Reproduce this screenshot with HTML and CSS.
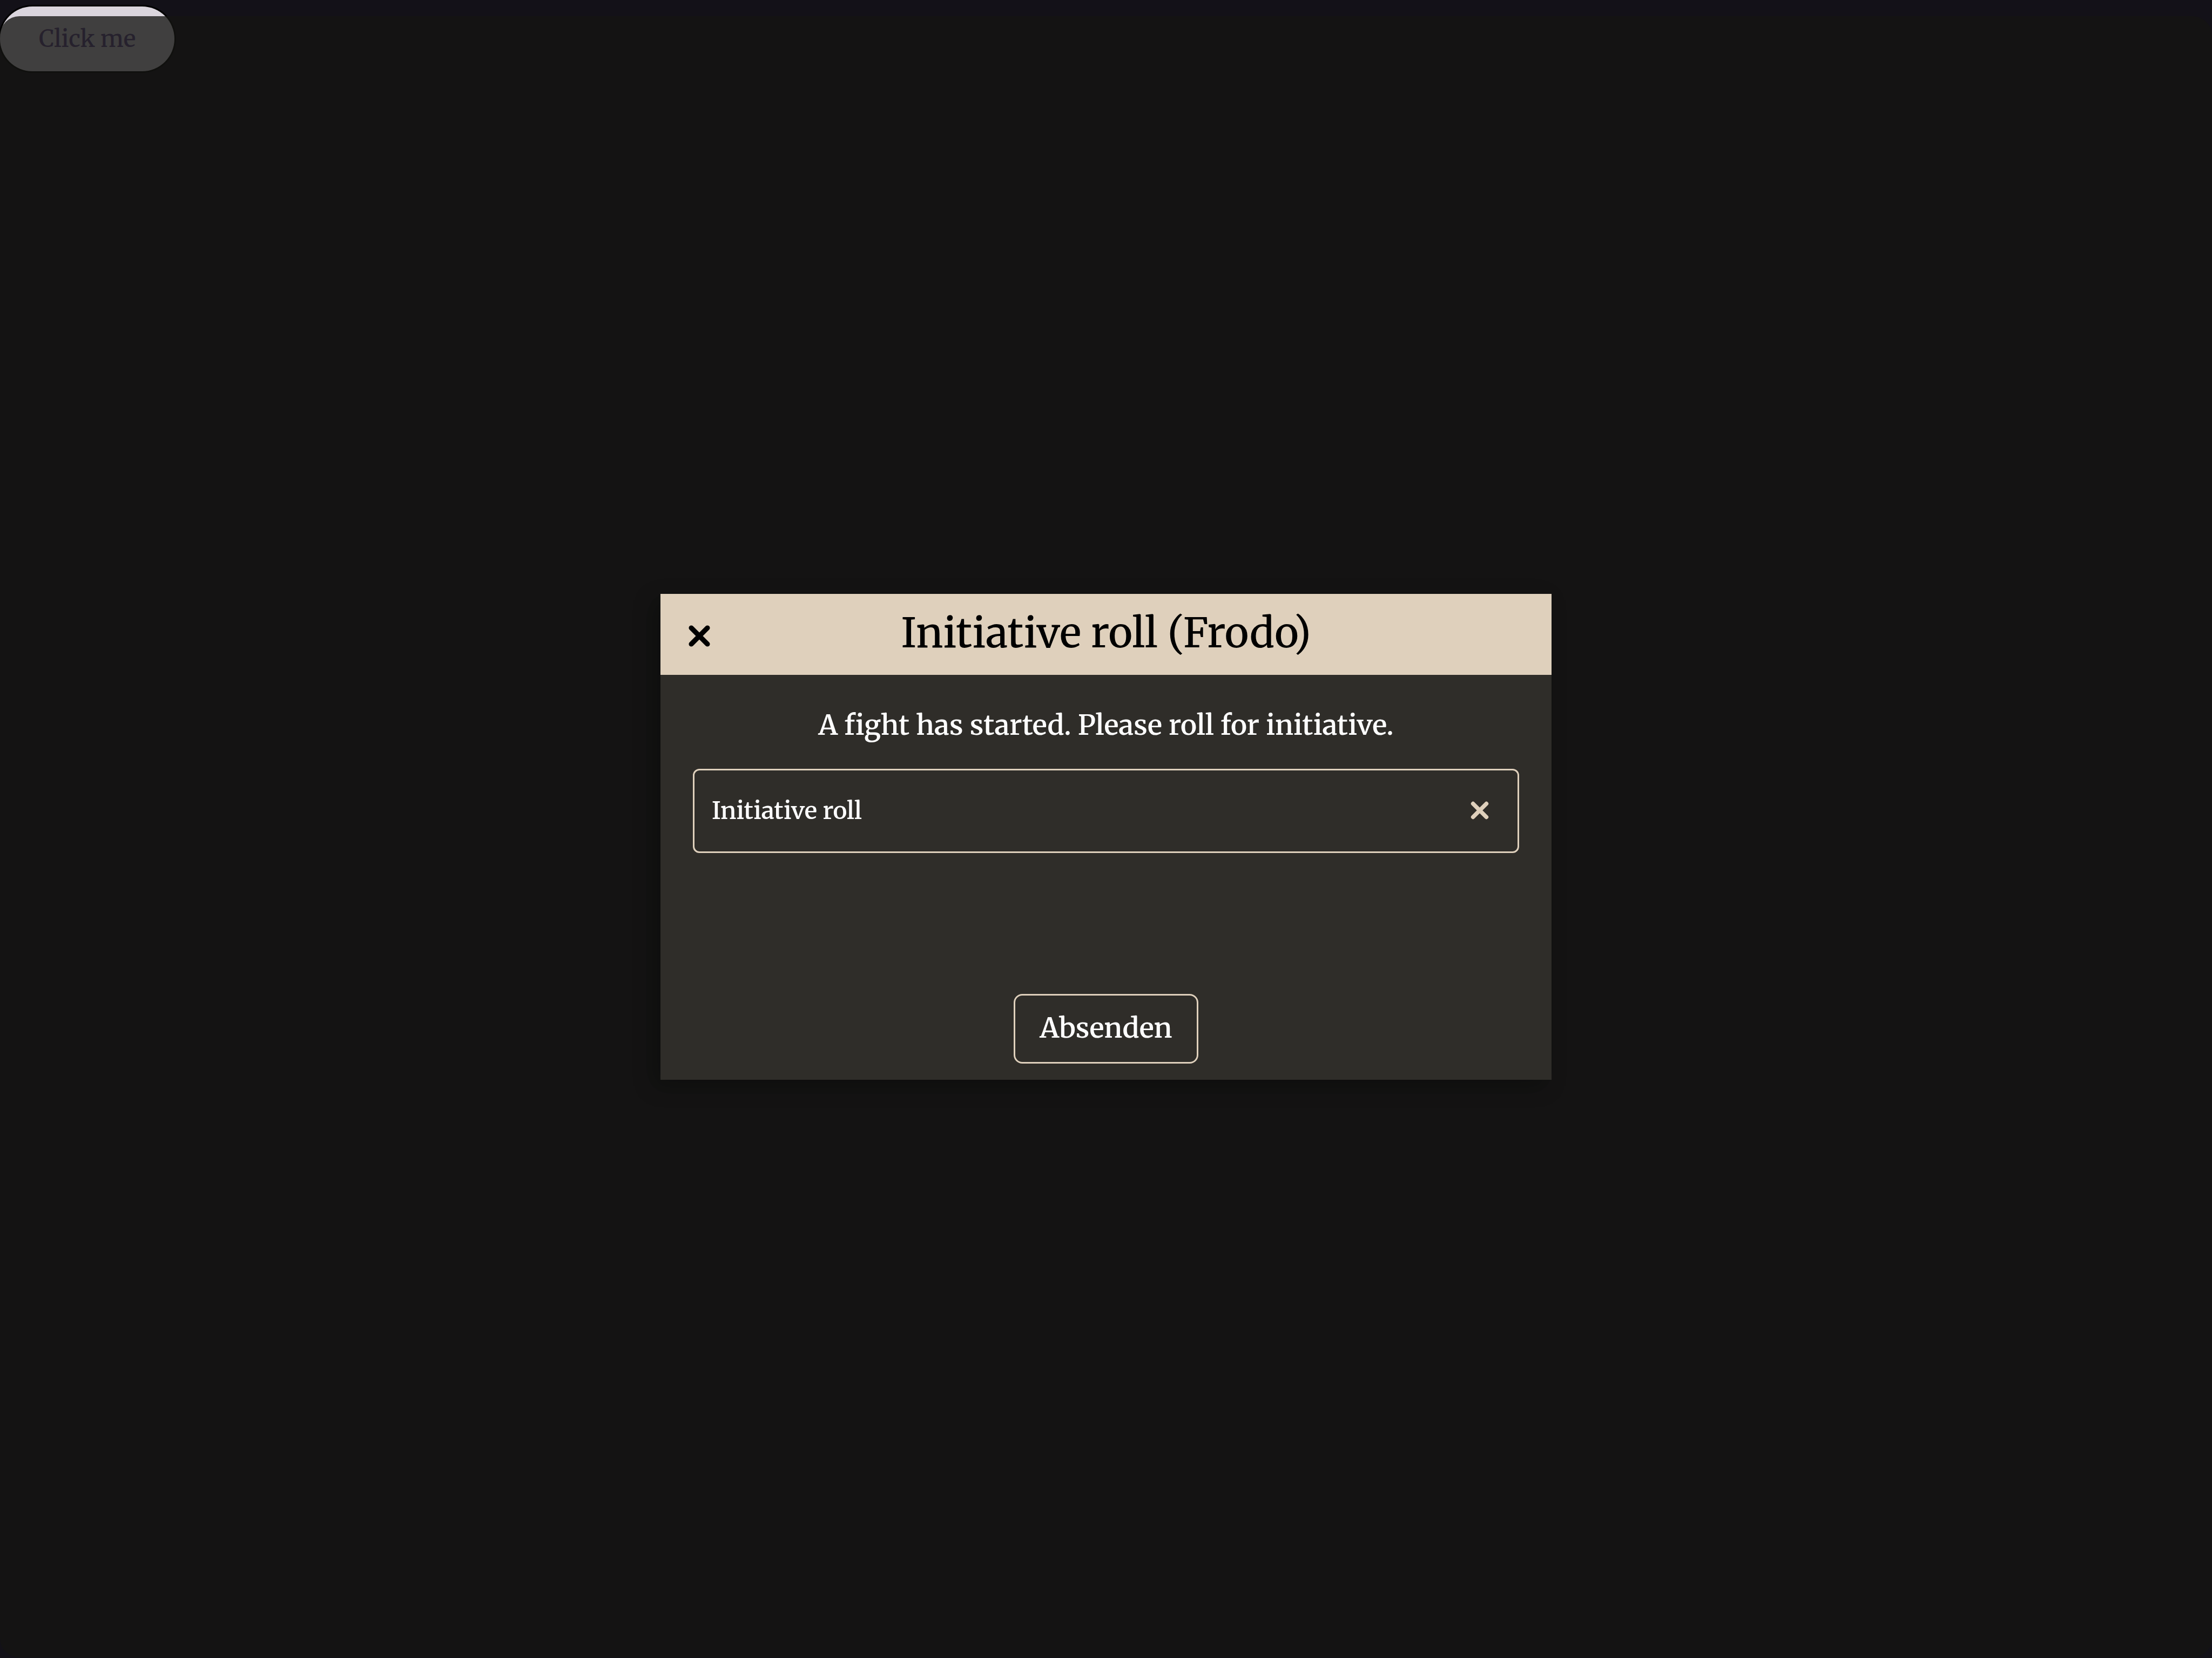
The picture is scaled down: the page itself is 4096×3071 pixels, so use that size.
FILE: index.html
```
<!DOCTYPE html>
<html lang="en">
<head>
<meta charset="utf-8">
<title>Initiative roll</title>
<link rel="stylesheet" href="styles.css">
</head>
<body>
<main class="page">
  <button class="trigger" type="button">Click me</button>
</main>
<div class="backdrop">
  <section class="dialog" role="dialog" aria-modal="true" aria-labelledby="dialog-title">
    <header class="dialog-header">
      <button class="icon-button close" type="button" aria-label="Close">
        <svg class="icon" viewBox="0 0 40 40"><path d="M7 7L33 33M33 7L7 33"/></svg>
      </button>
      <h1 class="dialog-title" id="dialog-title">Initiative roll (Frodo)</h1>
    </header>
    <form class="dialog-body">
      <p class="message">A fight has started. Please roll for initiative.</p>
      <div class="field">
        <input class="field-input" type="text" aria-label="Initiative roll" placeholder="Initiative roll">
        <button class="icon-button clear" type="button" aria-label="Clear">
          <svg class="icon icon-small" viewBox="0 0 40 40"><path d="M7 7L33 33M33 7L7 33"/></svg>
        </button>
      </div>
      <button class="submit" type="submit">Absenden</button>
    </form>
  </section>
</div>
</body>
</html>
```
FILE: styles.css
```
* {
  box-sizing: border-box;
}

body {
  margin: 0;
  min-height: 100vh;
  background: #131118;
  font-family: Merriweather, "DejaVu Serif Condensed", "DejaVu Serif", serif;
  font-weight: 500;
}

button,
input {
  margin: 0;
  padding: 0;
  border: 0;
  background: none;
  color: inherit;
  font: inherit;
}

.page {
  padding-top: 12px;
}

.trigger {
  display: block;
  height: 120px;
  padding: 0 72px;
  border-radius: 60px;
  background: #dad5dd;
  box-shadow: 0 0 0 3px #000;
  color: #64508e;
  font-size: 43px;
}

.backdrop {
  position: fixed;
  inset: 30px 0 1px;
  display: flex;
  align-items: center;
  justify-content: center;
  border-radius: 36px;
  background: rgba(20, 20, 18, 0.78);
}

.dialog {
  display: flex;
  flex-direction: column;
  width: 1650px;
  min-height: 900px;
  background: #2f2d29;
  box-shadow: -12px 12px 36px rgba(0, 0, 0, 0.3);
  color: #fff;
  font-weight: 600;
}

.dialog-header {
  display: grid;
  grid-template-columns: 144px 1fr 144px;
  align-items: center;
  height: 150px;
  background: #dfd0bc;
  color: #000;
}

.dialog-title {
  margin: 0;
  padding-bottom: 6px;
  font-size: 76px;
  font-weight: 500;
  line-height: 90px;
  text-align: center;
}

.icon-button {
  display: flex;
  align-items: center;
  justify-content: center;
}

.close {
  padding-top: 6px;
}

.icon {
  width: 46px;
  height: 46px;
  fill: none;
  stroke: currentColor;
  stroke-width: 8;
  stroke-linecap: round;
}

.icon-small {
  width: 38px;
  height: 38px;
}

.dialog-body {
  display: flex;
  flex: 1;
  flex-direction: column;
  padding: 60px 60px 30px;
}

.message {
  margin: 0 0 48px;
  font-size: 51px;
  line-height: 66px;
  text-align: center;
}

.field {
  display: flex;
  align-items: center;
  height: 156px;
  padding: 0 32px 2px;
  border: 3px solid #dfd0bc;
  border-radius: 12px;
}

.field-input {
  flex: 1;
  min-width: 0;
  font-size: 44px;
  outline: 0;
}

.field-input::placeholder {
  color: #fff;
  opacity: 1;
}

.clear {
  width: 76px;
  color: #dfd0bc;
}

.submit {
  align-self: center;
  height: 129px;
  margin-top: auto;
  padding: 0 45px 3px;
  border: 3px solid #dfd0bc;
  border-radius: 16px;
  font-size: 51px;
}
```
